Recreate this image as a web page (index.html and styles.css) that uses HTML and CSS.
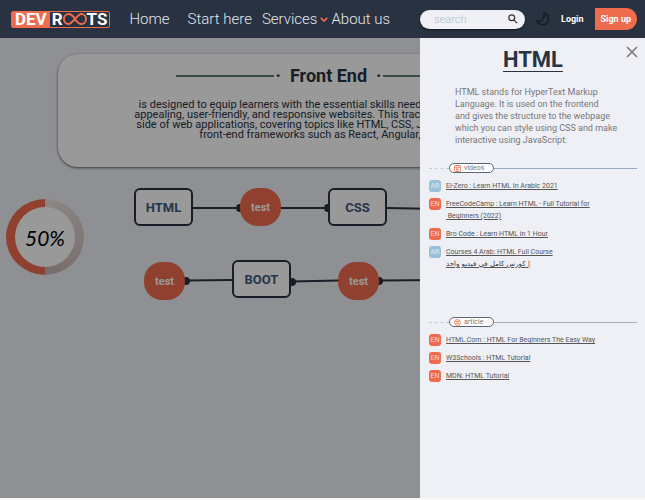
FILE: index.html
```html
<!DOCTYPE html>
<html lang="en">
<head>
<meta charset="utf-8">
<meta name="viewport" content="width=device-width, initial-scale=1">
<title>DevRoots - Front End</title>
<link rel="stylesheet" href="styles.css">
</head>
<body>
<header class="topbar">
  <a class="logo" href="#" aria-label="DevRoots">
    <span class="logo-dev">DEV</span>
    <span class="logo-roots">R<svg class="logo-loop" viewBox="0 0 24 14" aria-hidden="true"><path d="M12 7C9.500 3 7.500 2 5.500 2a4.500 5 0 0 0 0 10C9.500 12 14 2 18.500 2a4.500 5 0 0 1 0 10C16.500 12 14.500 11 12 7Z"/></svg>TS</span>
  </a>
  <nav class="menu">
    <a href="#">Home</a>
    <a href="#">Start here</a>
    <a class="has-sub" href="#">Services<svg class="chevron" viewBox="0 0 10 6" aria-hidden="true"><path d="M1 1l4 4 4-4"/></svg></a>
    <a href="#">About us</a>
  </nav>
  <form class="search">
    <input type="search" placeholder="search" aria-label="search">
    <button type="button" aria-label="Search"><svg viewBox="0 0 12 12" aria-hidden="true"><circle cx="4.500" cy="4.500" r="3.500"/><path d="M7 7l4 4"/></svg></button>
  </form>
  <button class="theme" type="button" aria-label="Dark mode"><svg viewBox="0 0 16 16" aria-hidden="true"><path d="M9 2A6 6 0 1 1 2 10C7 11.500 10.500 7 9 2Z"/></svg></button>
  <a class="login" href="#">Login</a>
  <a class="signup" href="#">Sign up</a>
</header>

<main class="page">
  <section class="intro">
    <h1><span class="rule"></span><span>· &nbsp;Front End&nbsp; ·</span><span class="rule"></span></h1>
    <p>is designed to equip learners with the essential skills needed to create visually<br>
    appealing, user-friendly, and responsive websites. This track covers all the client<br>
    side of web applications, covering topics like HTML, CSS, JavaScript, and many<br>
    front-end frameworks such as React, Angular, or Vue.</p>
  </section>

  <section class="roadmap">
    <div class="progress"><span>50%</span></div>
    <svg class="wires" viewBox="0 0 645 130" aria-hidden="true">
      <path d="M193 28H240M281 28H328M386 28L440 29M185 100.500L232 100M291 101.500L338 100.500M379 100.500L440 100"/>
      <circle cx="240" cy="28" r="4"/><circle cx="328" cy="28" r="4"/>
      <circle cx="186" cy="101" r="4"/><circle cx="292" cy="102" r="4"/><circle cx="379" cy="101" r="4"/>
    </svg>
    <button class="node html" type="button">HTML</button>
    <button class="node quiz quiz-1" type="button">test</button>
    <button class="node css" type="button">CSS</button>
    <button class="node quiz quiz-2" type="button">test</button>
    <button class="node boot" type="button">BOOT</button>
    <button class="node quiz quiz-3" type="button">test</button>
  </section>

  <div class="backdrop"></div>

  <aside class="drawer">
    <button class="close" type="button" aria-label="Close"><svg viewBox="0 0 10 10" aria-hidden="true"><path d="M0 0l10 10M10 0L0 10"/></svg></button>
    <h2>HTML</h2>
    <p class="summary">HTML stands for HyperText Markup<br>Language. It is used on the frontend<br>and gives the structure to the webpage<br>which you can style using CSS and make<br>interactive using JavaScript.</p>

    <section class="group videos">
      <h3 class="divider"><span class="tag"><svg viewBox="0 0 8 8" aria-hidden="true"><rect x=".5" y=".5" width="7" height="7" rx="1"/><path d="M1 2.500h6M3 4l2 1-2 1z"/></svg>videos</span></h3>
      <ul>
        <li><span class="lang ar">AR</span><a href="#">El-Zero : Learn HTML In Arabic 2021</a></li>
        <li><span class="lang">EN</span><a href="#">FreeCodeCamp : Learn HTML - Full Tutorial for<br>&nbsp;Beginners (2022)</a></li>
        <li><span class="lang">EN</span><a href="#">Bro Code : Learn HTML in 1 Hour</a></li>
        <li><span class="lang ar">AR</span><a href="#">Courses 4 Arab: HTML Full Course<br><bdi class="arabic" dir="rtl" lang="ar">| كورس كامل في فيديو واحد</bdi></a></li>
      </ul>
    </section>

    <section class="group">
      <h3 class="divider"><span class="tag"><svg viewBox="0 0 8 8" aria-hidden="true"><circle cx="4" cy="4" r="3.300"/><path d="M2 3h4M2.500 5h3"/></svg>article</span></h3>
      <ul>
        <li><span class="lang">EN</span><a href="#">HTML.Com : HTML For Beginners The Easy Way</a></li>
        <li><span class="lang">EN</span><a href="#">W3Schools : HTML Tutorial</a></li>
        <li><span class="lang">EN</span><a href="#">MDN: HTML Tutorial</a></li>
      </ul>
    </section>
  </aside>
</main>
</body>
</html>
```
FILE: styles.css
```css
:root {
  --navy: #293241;
  --orange: #ee6c4d;
  --paper: #eff0f5;
}

* { box-sizing: border-box; }

body {
  margin: 0;
  min-height: 100vh;
  display: flex;
  flex-direction: column;
  padding-bottom: 2px;
  background: #f7f7f7;
  color: var(--navy);
  font-family: Roboto, "Liberation Sans", sans-serif;
  overflow: hidden;
}

a { color: inherit; text-decoration: none; }
button { padding: 0; border: 0; background: none; font-family: inherit; }
svg { display: block; fill: none; stroke: currentColor; }
h1, h2, h3, p, ul { margin: 0; padding: 0; }

/* Top bar */
.topbar {
  height: 38px;
  display: flex;
  align-items: center;
  padding: 0 8px 0 11px;
  background: var(--navy);
  color: #e4e7ec;
}

.logo {
  display: flex;
  height: 17px;
  border: 1px solid var(--orange);
  border-radius: 2px;
  color: #fff;
  font-size: 17px;
  line-height: 15px;
  font-weight: 700;
}
.logo-dev { padding: 0 3px; background: var(--orange); }
.logo-roots { display: flex; align-items: center; padding: 0 2px; }
.logo-loop { width: 24px; height: 14px; stroke: var(--orange); stroke-width: 2; }

.menu {
  display: flex;
  margin-left: 19px;
  font-size: 15px;
  font-weight: 300;
}
.menu a { margin-right: 18px; }
.menu a:nth-child(2) { margin-right: 10px; }
.menu .has-sub { display: flex; align-items: center; gap: 3px; margin-right: 3px; }
.menu a:last-child { margin-right: 0; }
.chevron { width: 8px; height: 5px; color: var(--orange); stroke-width: 2; }

.search {
  display: flex;
  align-items: center;
  width: 105px;
  height: 19px;
  margin-left: auto;
  padding: 0 7px 0 14px;
  border-radius: 10px;
  background: var(--paper);
  box-shadow: 0 1px 2px #0008;
}
.search input {
  flex: 1;
  min-width: 0;
  padding: 0;
  border: 0;
  outline: 0;
  background: none;
  font: 300 11px Roboto, sans-serif;
}
.search input::placeholder { color: #aec3c9; opacity: 1; }
.search button { color: #333; }
.search button svg { width: 10px; height: 10px; stroke-width: 1.5; }

.theme { margin: 0 10px; color: #161c28; }
.theme svg { width: 16px; height: 16px; stroke-width: 1.5; }
.login { margin-right: 11px; color: #fff; font-size: 9px; font-weight: 700; }
.signup {
  padding: 0 6px;
  border-radius: 0 11px 11px 0;
  background: var(--orange);
  color: #fff;
  font-size: 9px;
  line-height: 22px;
  font-weight: 700;
}

/* Page */
.page {
  position: relative;
  flex: 1;
  padding-top: 16px;
  background: #eff1f5;
}

.intro {
  margin: 0 46px 0 58px;
  padding: 12px 20px 27px;
  border-radius: 20px;
  background: #fff;
  box-shadow: 0 1px 3px #0009;
  text-align: center;
}
.intro h1 {
  display: flex;
  align-items: center;
  justify-content: center;
  gap: 2px;
  font-size: 18px;
  line-height: 20px;
  font-weight: 700;
}
.rule { width: 98px; height: 2px; background: #667b7d; }
.intro p { margin-top: 14px; font-size: 11px; line-height: 10px; white-space: nowrap; }

/* Roadmap canvas */
.roadmap { position: relative; height: 130px; margin-top: 13px; }
.wires { position: absolute; left: 0; top: 0; width: 645px; height: 130px; stroke-width: 2; }
.wires circle { fill: currentColor; stroke: none; }
.node {
  position: absolute;
  width: 59px;
  height: 38px;
  border: 2px solid var(--navy);
  border-radius: 6px;
  background: #fff;
  color: #3d5a80;
  font-size: 13px;
  font-weight: 700;
}
.quiz {
  width: 41px;
  border: 0;
  border-radius: 18px;
  background: var(--orange);
  color: #fff;
  font-size: 11px;
}
.html { left: 134px; top: 8px; }
.quiz-1 { left: 240px; top: 8px; }
.css { left: 328px; top: 8px; }
.quiz-2 { left: 144px; top: 82px; }
.boot { left: 232px; top: 80px; }
.quiz-3 { left: 338px; top: 82px; }

.progress {
  position: absolute;
  left: 6px;
  top: 19px;
  display: grid;
  place-items: center;
  width: 78px;
  height: 76px;
  border-radius: 50%;
  background: conic-gradient(#e6e3e0, #c6b3af 50%, var(--orange) 50%);
}
.progress span {
  display: grid;
  place-items: center;
  width: 60px;
  height: 60px;
  border-radius: 50%;
  background: #fff;
  color: #000;
  font: italic 400 21px Lato, sans-serif;
}

.backdrop { position: absolute; inset: 0; background: rgba(0, 0, 0, .4); }

/* Drawer */
.drawer {
  position: absolute;
  top: 0;
  right: 0;
  bottom: 0;
  width: 225px;
  padding: 11px 8px 0 9px;
  background: var(--paper);
}
.close { position: absolute; top: 9px; right: 8px; color: #777; }
.close svg { width: 10px; height: 10px; overflow: visible; stroke-width: 1.5; }
.drawer h2 {
  width: max-content;
  margin: 0 auto;
  border-bottom: 1px solid var(--navy);
  font-size: 22px;
  line-height: 22px;
  font-weight: 700;
}
.summary { margin: 14px 0 0 26px; color: #777; font-size: 9px; line-height: 12px; }

.group { margin-top: 17px; }
.videos { min-height: 137px; }
.divider {
  display: flex;
  align-items: center;
  font-size: 7px;
  line-height: 8px;
  font-weight: 400;
  color: #777;
}
.divider::before { content: ""; width: 20px; border-top: 1px dashed #c5cad1; }
.divider::after { content: ""; flex: 1; border-top: 1px solid #a9b1bd; }
.videos .divider::after { border-color: #98aac3; }
.tag {
  display: flex;
  align-items: center;
  gap: 3px;
  width: 45px;
  padding: 0 4px;
  border: 1px solid #5d6675;
  border-radius: 5px;
  background: #fff;
}
.tag svg { width: 7px; height: 7px; color: var(--orange); }

.group ul {
  display: grid;
  gap: 6px;
  margin-top: 7px;
  list-style: none;
  font-size: 7px;
  line-height: 12px;
}
.group li { display: flex; align-items: flex-start; gap: 5px; }
.group a { color: #555; text-decoration: underline; }
.arabic { color: #333; font-family: "DejaVu Sans", sans-serif; }
.lang {
  width: 12px;
  height: 12px;
  border-radius: 3px;
  background: var(--orange);
  color: #fbd5cb;
  text-align: center;
}
.lang.ar { background: #98c1d9; color: #dcebf3; }
```
